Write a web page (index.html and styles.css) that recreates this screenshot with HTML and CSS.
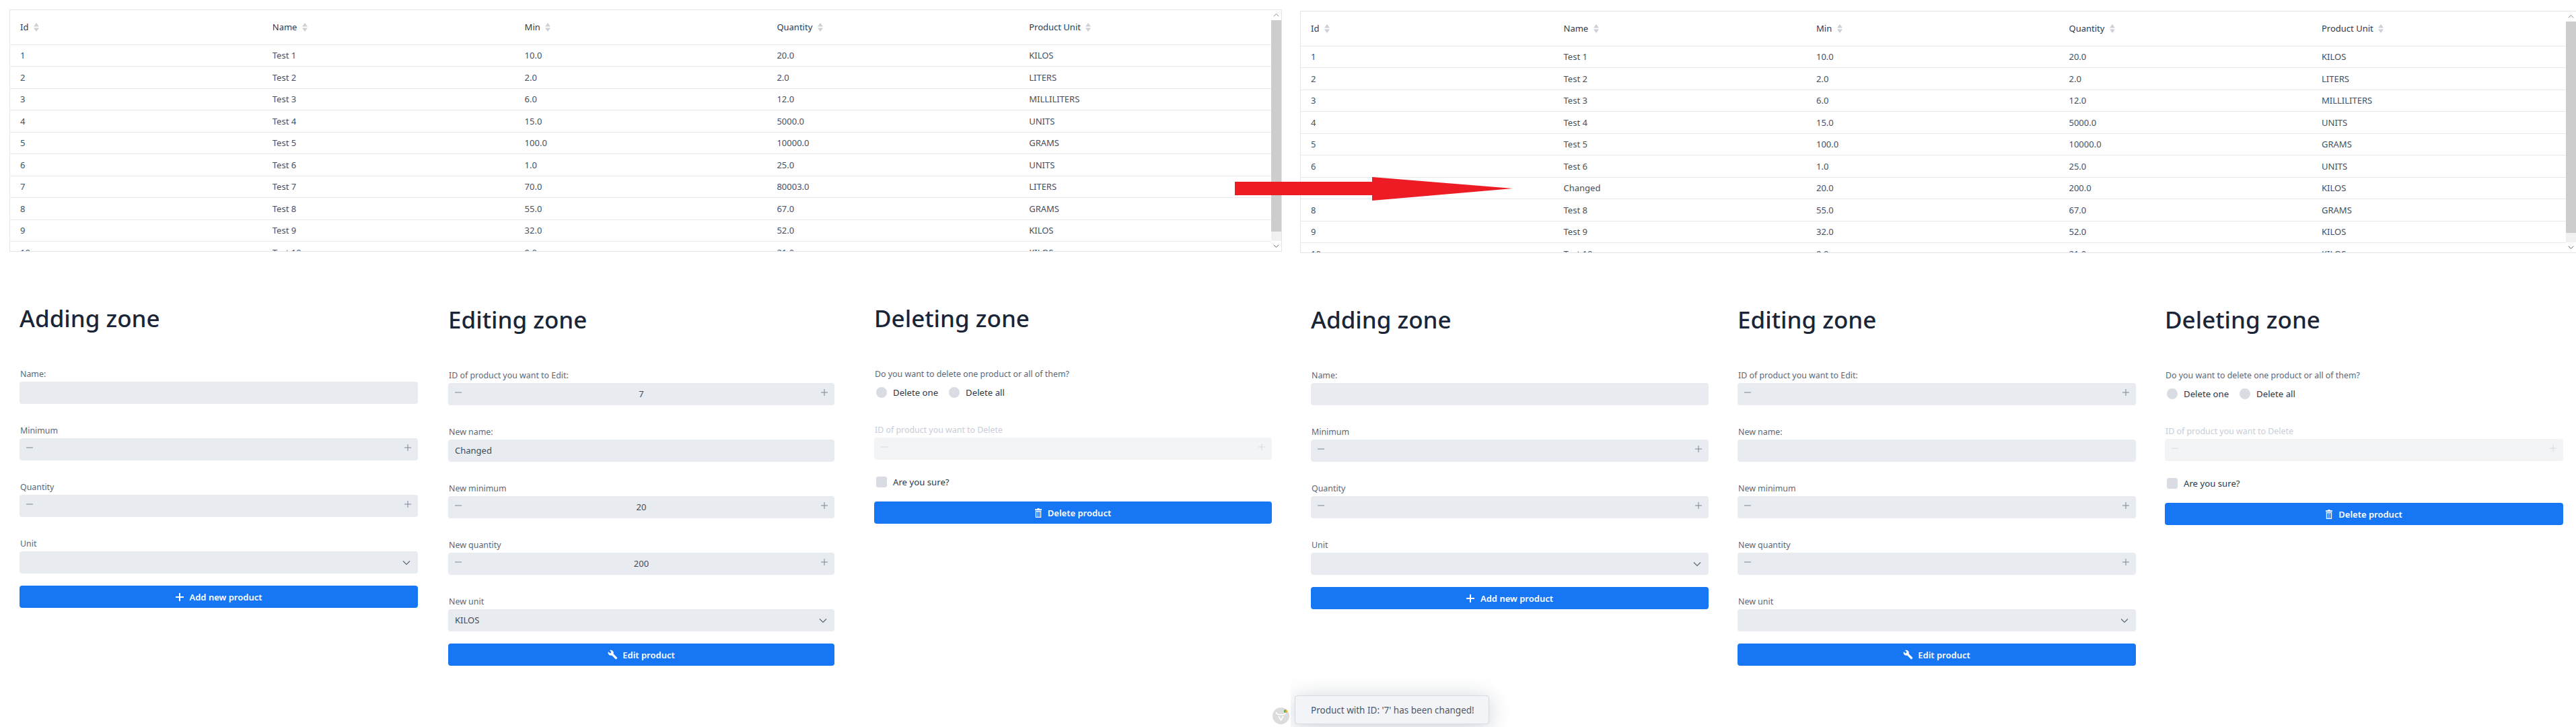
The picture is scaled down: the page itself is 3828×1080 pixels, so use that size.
FILE: index.html
```html
<!DOCTYPE html>
<html lang="en">
<head>
    <meta charset="UTF-8">
    <meta name="viewport" content="width=device-width, initial-scale=1.0">
    <title>Products</title>
    <link rel="stylesheet" href="styles.css">
</head>
<body>
    <svg class="sprite" width="0" height="0">
        <symbol id="ic-minus" viewBox="0 0 12 12"><path d="M1 6h10" fill="none" stroke="currentColor" stroke-width="1"/></symbol>
        <symbol id="ic-plus" viewBox="0 0 12 12"><path d="M1 6h10M6 1v10" fill="none" stroke="currentColor" stroke-width="1"/></symbol>
        <symbol id="ic-chevron" viewBox="0 0 12 12"><path d="M1 3.5l5 5 5-5" fill="none" stroke="currentColor" stroke-width="1.2"/></symbol>
        <symbol id="ic-sort" viewBox="0 0 8 13"><path d="M4 0l4 5.5H0zM4 13L0 7.5h8z" fill="currentColor"/></symbol>
        <symbol id="ic-add" viewBox="0 0 12 12"><path d="M0 6h12M6 0v12" fill="none" stroke="currentColor" stroke-width="2"/></symbol>
        <symbol id="ic-wrench" viewBox="0 0 24 24"><path d="M22.7 19l-9.1-9.1c.9-2.3.4-5-1.5-6.9-2-2-5-2.4-7.4-1.3L9 6 6 9 1.6 4.7C.4 7.1.9 10.1 2.9 12.1c1.9 1.9 4.6 2.4 6.9 1.5l9.1 9.1c.4.4 1 .4 1.4 0l2.3-2.3c.5-.4.5-1.1.1-1.4z" fill="currentColor"/></symbol>
        <symbol id="ic-trash" viewBox="0 0 10 14"><path d="M3.5 0h3v1.2H10v2H0v-2h3.500zM.8 4h8.400v10H.8zM2 5.200v7.600h1.500V5.200zm2.200 0v7.600h1.600V5.200zm2.300 0v7.600H8V5.200z" fill="currentColor" fill-rule="evenodd"/></symbol>
    </svg>

    <div class="shots">
        <!-- before the edit -->
        <section class="shot shot-before">
            <div class="grid-box">
                <div class="grid-scroll">
                    <table class="grid">
                        <thead>
                            <tr>
                                <th>Id <svg class="sort"><use href="#ic-sort"/></svg></th>
                                <th>Name <svg class="sort"><use href="#ic-sort"/></svg></th>
                                <th>Min <svg class="sort"><use href="#ic-sort"/></svg></th>
                                <th>Quantity <svg class="sort"><use href="#ic-sort"/></svg></th>
                                <th>Product Unit <svg class="sort"><use href="#ic-sort"/></svg></th>
                            </tr>
                        </thead>
                        <tbody>
                            <tr><td>1</td><td>Test 1</td><td>10.0</td><td>20.0</td><td>KILOS</td></tr>
                            <tr><td>2</td><td>Test 2</td><td>2.0</td><td>2.0</td><td>LITERS</td></tr>
                            <tr><td>3</td><td>Test 3</td><td>6.0</td><td>12.0</td><td>MILLILITERS</td></tr>
                            <tr><td>4</td><td>Test 4</td><td>15.0</td><td>5000.0</td><td>UNITS</td></tr>
                            <tr><td>5</td><td>Test 5</td><td>100.0</td><td>10000.0</td><td>GRAMS</td></tr>
                            <tr><td>6</td><td>Test 6</td><td>1.0</td><td>25.0</td><td>UNITS</td></tr>
                            <tr><td>7</td><td>Test 7</td><td>70.0</td><td>80003.0</td><td>LITERS</td></tr>
                            <tr><td>8</td><td>Test 8</td><td>55.0</td><td>67.0</td><td>GRAMS</td></tr>
                            <tr><td>9</td><td>Test 9</td><td>32.0</td><td>52.0</td><td>KILOS</td></tr>
                            <tr><td>10</td><td>Test 10</td><td>9.0</td><td>21.0</td><td>KILOS</td></tr>
                        </tbody>
                    </table>
                </div>
                <div class="scrollbar">
                    <span class="scroll-arrow scroll-up"><svg class="scroll-ic"><use href="#ic-chevron"/></svg></span>
                    <span class="scroll-thumb"></span>
                    <span class="scroll-arrow scroll-down"><svg class="scroll-ic"><use href="#ic-chevron"/></svg></span>
                </div>
            </div>

            <div class="zones">
                <div class="zone zone-add">
                    <h2>Adding zone</h2>
                    <div class="field"><label>Name:</label><div class="control"></div></div>
                    <div class="field"><label>Minimum</label><div class="control control-num"><svg class="ic"><use href="#ic-minus"/></svg><svg class="ic"><use href="#ic-plus"/></svg></div></div>
                    <div class="field"><label>Quantity</label><div class="control control-num"><svg class="ic"><use href="#ic-minus"/></svg><svg class="ic"><use href="#ic-plus"/></svg></div></div>
                    <div class="field field-last"><label>Unit</label><div class="control control-select"><svg class="ic-chevron"><use href="#ic-chevron"/></svg></div></div>
                    <button class="btn"><svg class="btn-ic"><use href="#ic-add"/></svg>Add new product</button>
                </div>

                <div class="zone zone-edit">
                    <h2>Editing zone</h2>
                    <div class="field"><label>ID of product you want to Edit:</label><div class="control control-num"><svg class="ic"><use href="#ic-minus"/></svg><span class="num-value">7</span><svg class="ic"><use href="#ic-plus"/></svg></div></div>
                    <div class="field"><label>New name:</label><div class="control">Changed</div></div>
                    <div class="field"><label>New minimum</label><div class="control control-num"><svg class="ic"><use href="#ic-minus"/></svg><span class="num-value">20</span><svg class="ic"><use href="#ic-plus"/></svg></div></div>
                    <div class="field"><label>New quantity</label><div class="control control-num"><svg class="ic"><use href="#ic-minus"/></svg><span class="num-value">200</span><svg class="ic"><use href="#ic-plus"/></svg></div></div>
                    <div class="field field-last"><label>New unit</label><div class="control control-select">KILOS<svg class="ic-chevron"><use href="#ic-chevron"/></svg></div></div>
                    <button class="btn"><svg class="btn-ic btn-ic-wrench"><use href="#ic-wrench"/></svg>Edit product</button>
                </div>

                <div class="zone zone-delete">
                    <h2>Deleting zone</h2>
                    <label>Do you want to delete one product or all of them?</label>
                    <div class="radios">
                        <span class="radio"></span><span class="check-text">Delete one</span>
                        <span class="radio"></span><span class="check-text">Delete all</span>
                    </div>
                    <div class="field field-disabled"><label>ID of product you want to Delete</label><div class="control control-num"><svg class="ic"><use href="#ic-minus"/></svg><svg class="ic"><use href="#ic-plus"/></svg></div></div>
                    <div class="sure"><span class="checkbox"></span><span class="check-text">Are you sure?</span></div>
                    <button class="btn"><svg class="btn-ic btn-ic-trash"><use href="#ic-trash"/></svg>Delete product</button>
                </div>
            </div>

            <div class="dev-badge">
                <svg viewBox="0 0 25 25" width="25" height="25">
                    <circle cx="12.500" cy="12.500" r="12.500" fill="#dcdcdc"/>
                    <path d="M5 7c1 2.500 2.500 3.500 4.500 3.500h6c2 0 3.500-1 4.500-3.500" fill="none" stroke="#fff" stroke-width="1.500"/>
                    <path d="M9 13l3.500 6 3.500-6" fill="none" stroke="#fff" stroke-width="1.500"/>
                    <path d="M19.500 3a2.500 2.500 0 0 0 0 5z" fill="#2eb84c"/>
                    <path d="M19.500 3a2.500 2.500 0 0 1 0 5z" fill="#f5a623"/>
                </svg>
            </div>
        </section>

        <!-- after the edit -->
        <section class="shot shot-after">
            <div class="grid-box">
                <div class="grid-scroll">
                    <table class="grid">
                        <thead>
                            <tr>
                                <th>Id <svg class="sort"><use href="#ic-sort"/></svg></th>
                                <th>Name <svg class="sort"><use href="#ic-sort"/></svg></th>
                                <th>Min <svg class="sort"><use href="#ic-sort"/></svg></th>
                                <th>Quantity <svg class="sort"><use href="#ic-sort"/></svg></th>
                                <th>Product Unit <svg class="sort"><use href="#ic-sort"/></svg></th>
                            </tr>
                        </thead>
                        <tbody>
                            <tr><td>1</td><td>Test 1</td><td>10.0</td><td>20.0</td><td>KILOS</td></tr>
                            <tr><td>2</td><td>Test 2</td><td>2.0</td><td>2.0</td><td>LITERS</td></tr>
                            <tr><td>3</td><td>Test 3</td><td>6.0</td><td>12.0</td><td>MILLILITERS</td></tr>
                            <tr><td>4</td><td>Test 4</td><td>15.0</td><td>5000.0</td><td>UNITS</td></tr>
                            <tr><td>5</td><td>Test 5</td><td>100.0</td><td>10000.0</td><td>GRAMS</td></tr>
                            <tr><td>6</td><td>Test 6</td><td>1.0</td><td>25.0</td><td>UNITS</td></tr>
                            <tr><td>7</td><td>Changed</td><td>20.0</td><td>200.0</td><td>KILOS</td></tr>
                            <tr><td>8</td><td>Test 8</td><td>55.0</td><td>67.0</td><td>GRAMS</td></tr>
                            <tr><td>9</td><td>Test 9</td><td>32.0</td><td>52.0</td><td>KILOS</td></tr>
                            <tr><td>10</td><td>Test 10</td><td>9.0</td><td>21.0</td><td>KILOS</td></tr>
                        </tbody>
                    </table>
                </div>
                <div class="scrollbar">
                    <span class="scroll-arrow scroll-up"><svg class="scroll-ic"><use href="#ic-chevron"/></svg></span>
                    <span class="scroll-thumb"></span>
                    <span class="scroll-arrow scroll-down"><svg class="scroll-ic"><use href="#ic-chevron"/></svg></span>
                </div>
            </div>

            <div class="zones">
                <div class="zone zone-add">
                    <h2>Adding zone</h2>
                    <div class="field"><label>Name:</label><div class="control"></div></div>
                    <div class="field"><label>Minimum</label><div class="control control-num"><svg class="ic"><use href="#ic-minus"/></svg><svg class="ic"><use href="#ic-plus"/></svg></div></div>
                    <div class="field"><label>Quantity</label><div class="control control-num"><svg class="ic"><use href="#ic-minus"/></svg><svg class="ic"><use href="#ic-plus"/></svg></div></div>
                    <div class="field field-last"><label>Unit</label><div class="control control-select"><svg class="ic-chevron"><use href="#ic-chevron"/></svg></div></div>
                    <button class="btn"><svg class="btn-ic"><use href="#ic-add"/></svg>Add new product</button>
                </div>

                <div class="zone zone-edit">
                    <h2>Editing zone</h2>
                    <div class="field"><label>ID of product you want to Edit:</label><div class="control control-num"><svg class="ic"><use href="#ic-minus"/></svg><svg class="ic"><use href="#ic-plus"/></svg></div></div>
                    <div class="field"><label>New name:</label><div class="control"></div></div>
                    <div class="field"><label>New minimum</label><div class="control control-num"><svg class="ic"><use href="#ic-minus"/></svg><svg class="ic"><use href="#ic-plus"/></svg></div></div>
                    <div class="field"><label>New quantity</label><div class="control control-num"><svg class="ic"><use href="#ic-minus"/></svg><svg class="ic"><use href="#ic-plus"/></svg></div></div>
                    <div class="field field-last"><label>New unit</label><div class="control control-select"><svg class="ic-chevron"><use href="#ic-chevron"/></svg></div></div>
                    <button class="btn"><svg class="btn-ic btn-ic-wrench"><use href="#ic-wrench"/></svg>Edit product</button>
                </div>

                <div class="zone zone-delete">
                    <h2>Deleting zone</h2>
                    <label>Do you want to delete one product or all of them?</label>
                    <div class="radios">
                        <span class="radio"></span><span class="check-text">Delete one</span>
                        <span class="radio"></span><span class="check-text">Delete all</span>
                    </div>
                    <div class="field field-disabled"><label>ID of product you want to Delete</label><div class="control control-num"><svg class="ic"><use href="#ic-minus"/></svg><svg class="ic"><use href="#ic-plus"/></svg></div></div>
                    <div class="sure"><span class="checkbox"></span><span class="check-text">Are you sure?</span></div>
                    <button class="btn"><svg class="btn-ic btn-ic-trash"><use href="#ic-trash"/></svg>Delete product</button>
                </div>
            </div>

            <div class="toast">Product with ID: '7' has been changed!</div>
        </section>
    </div>

    <!-- arrow pasted across both shots -->
    <svg class="arrow" viewBox="0 0 413 35" width="413" height="35">
        <path d="M0 7h204V0l209 17-209 18v-8H0z" fill="#ed1c24"/>
    </svg>
</body>
</html>
```

FILE: styles.css
```css
body {
    font-family: "Noto Sans", "Open Sans", sans-serif;
    font-size: 13px;
    margin: 0;
    background-color: #fff;
    color: #44505f;
    height: 1080px;
    overflow: hidden;
    position: relative;
}
.sprite {
    position: absolute;
}
.shots {
    display: flex;
    height: 1080px;
}
.shot {
    position: relative;
    overflow: hidden;
    box-sizing: border-box;
    flex: none;
}
.shot-before {
    width: 1918px;
    padding: 14px 13px 0 14px;
    overflow: visible;
}
.shot-after {
    width: 1910px;
    padding: 16px 0 0 14px;
}

/* product grid */
.grid-box {
    display: flex;
    height: 360px;
    box-sizing: border-box;
    border: 1px solid #e2e5ea;
}
.shot-after .grid-box {
    border-right: 0;
}
.grid-scroll {
    flex: 1;
    overflow: hidden;
}
.grid {
    width: 100%;
    table-layout: fixed;
    border-collapse: collapse;
}
.grid th,
.grid td {
    padding: 0 0 0 15px;
    text-align: left;
    box-sizing: border-box;
    border-bottom: 1px solid #e8eaef;
    white-space: nowrap;
}
.grid th {
    height: 51px;
    font-weight: 400;
    color: #2c3a4e;
}
.shot-after .grid th:not(:last-child) {
    width: 375.5px;
}
.grid td {
    height: 32.5px;
}
.sort {
    width: 8px;
    height: 13px;
    margin-left: 4px;
    vertical-align: -2px;
    color: #ccd0d7;
}
.scrollbar {
    width: 15px;
    flex: none;
    display: flex;
    flex-direction: column;
    background-color: #f1f1f1;
}
.scroll-arrow {
    display: flex;
    align-items: center;
    justify-content: center;
    height: 15px;
    color: #808080;
    background-color: #fff;
}
.scroll-up .scroll-ic {
    transform: rotate(180deg);
}
.scroll-down {
    margin-top: auto;
    color: #505050;
}
.scroll-ic {
    width: 9px;
    height: 9px;
}
.scroll-thumb {
    height: 314px;
    background-color: #cdcdcd;
}

/* forms */
.zones {
    display: flex;
    padding: 79px 0 0 15px;
}
.shot-after .zones {
    padding-left: 16px;
    gap: 43px;
}
.shot-before .zone-add {
    width: 592px;
    margin-right: 45px;
}
.shot-before .zone-edit {
    width: 574px;
    margin-top: 2px;
    margin-right: 59px;
}
.shot-before .zone-delete {
    width: 591px;
}
.shot-after .zone {
    width: 592px;
}
.shot-after .zone-add {
    width: 591px;
}
h2 {
    margin: 0 0 53px;
    font-size: 35px;
    font-weight: 500;
    line-height: 40px;
    color: #1a2638;
}
label {
    display: block;
    height: 20px;
    line-height: 20px;
    margin-bottom: 1px;
    padding-left: 1px;
    font-size: 12.4px;
    color: #5c6877;
}
.field {
    margin-bottom: 30px;
}
.field-last {
    margin-bottom: 18px;
}
.control {
    height: 33px;
    line-height: 33px;
    padding: 0 10px;
    box-sizing: border-box;
    background-color: #e8ebef;
    border-radius: 4px;
    color: #3f4b5b;
}
.control-num {
    display: flex;
    align-items: center;
    justify-content: space-between;
    padding: 0 9px 0 9px;
    position: relative;
}
.num-value {
    position: absolute;
    left: 0;
    right: 0;
    text-align: center;
}
.control-select {
    display: flex;
    align-items: center;
    justify-content: space-between;
}
.ic {
    width: 12px;
    height: 12px;
    margin-top: -5px;
    color: #7a8594;
}
.ic-chevron {
    width: 12px;
    height: 12px;
    margin-left: auto;
    margin-right: 1px;
    color: #5c6877;
}
.btn {
    display: flex;
    align-items: center;
    justify-content: center;
    width: 100%;
    height: 33px;
    padding: 0;
    border: 0;
    border-radius: 4px;
    background-color: #1676f3;
    color: #fff;
    font-family: inherit;
    font-size: 13px;
    font-weight: 600;
}
.btn-ic {
    width: 12px;
    height: 12px;
    margin-right: 9px;
}
.btn-ic-wrench {
    width: 15px;
    height: 15px;
    margin-right: 7px;
}
.btn-ic-trash {
    width: 10px;
    height: 14px;
    margin-right: 9px;
}

/* delete zone */
.radios {
    display: flex;
    align-items: center;
    height: 16px;
    margin: 9px 0 38px 3px;
}
.radio {
    width: 16px;
    height: 16px;
    border-radius: 50%;
    background-color: #d9dce2;
}
.check-text {
    margin-left: 9px;
    margin-right: 16px;
    font-size: 13.2px;
    color: #2a384b;
}
.field-disabled {
    margin-bottom: 25px;
}
.field-disabled label {
    color: #c8cdd6;
}
.field-disabled .control {
    background-color: #f3f4f6;
}
.field-disabled .ic {
    color: #d6d9df;
}
.sure {
    display: flex;
    align-items: center;
    height: 16px;
    margin: 0 0 21px 3px;
}
.checkbox {
    width: 16px;
    height: 16px;
    border-radius: 3px;
    background-color: #d9dce2;
}

/* things lying over the page */
.toast {
    position: absolute;
    left: 6px;
    top: 1033px;
    width: 289px;
    height: 43px;
    line-height: 43px;
    box-sizing: border-box;
    padding-left: 23px;
    background-color: #f3f4f7;
    border: 1px solid #d5d8de;
    border-radius: 4px;
    box-shadow: 0 4px 32px rgba(24, 39, 75, .22);
    font-size: 13.5px;
    color: #4c5868;
}
.dev-badge {
    position: absolute;
    left: 1891px;
    top: 1051px;
    width: 25px;
    height: 25px;
}
.arrow {
    position: absolute;
    left: 1835px;
    top: 263px;
}
```
